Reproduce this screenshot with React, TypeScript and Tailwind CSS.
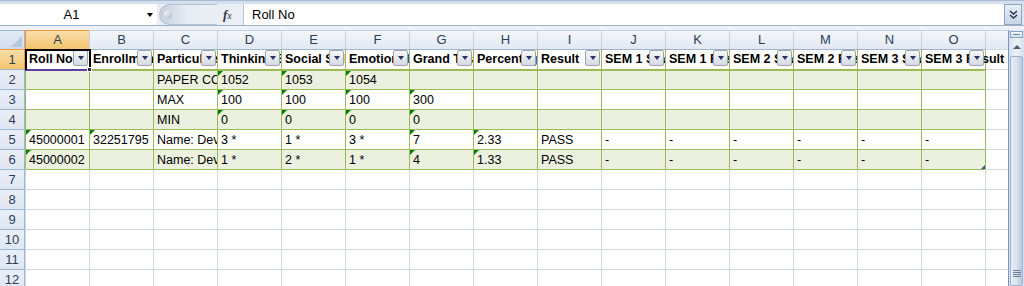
import React from "react";

const COLS = ["A","B","C","D","E","F","G","H","I","J","K","L","M","N","O"];

const HEAD = [
  "Roll No","Enrollment No","Particulars","Thinking Skills","Social Skills","Emotional Skills",
  "Grand Total","Percentage","Result","SEM 1 Status","SEM 1 Result","SEM 2 Status","SEM 2 Result","SEM 3 Status","SEM 3 Result",
];

type Cell = { v?: string; tri?: boolean };

const DATA: Cell[][] = [
  [{}, {}, { v: "PAPER CODE" }, { v: "1052", tri: true }, { v: "1053", tri: true }, { v: "1054", tri: true }, {}, {}, {}, {}, {}, {}, {}, {}, {}],
  [{}, {}, { v: "MAX" }, { v: "100", tri: true }, { v: "100", tri: true }, { v: "100", tri: true }, { v: "300", tri: true }, {}, {}, {}, {}, {}, {}, {}, {}],
  [{}, {}, { v: "MIN" }, { v: "0", tri: true }, { v: "0", tri: true }, { v: "0", tri: true }, { v: "0", tri: true }, {}, {}, {}, {}, {}, {}, {}, {}],
  [{ v: "45000001", tri: true }, { v: "32251795", tri: true }, { v: "Name: Devansh" }, { v: "3 *" }, { v: "1 *" }, { v: "3 *" }, { v: "7", tri: true }, { v: "2.33", tri: true }, { v: "PASS" }, { v: "-" }, { v: "-" }, { v: "-" }, { v: "-" }, { v: "-" }, { v: "-" }],
  [{ v: "45000002", tri: true }, {}, { v: "Name: Dev" }, { v: "1 *" }, { v: "2 *" }, { v: "1 *" }, { v: "4", tri: true }, { v: "1.33", tri: true }, { v: "PASS" }, { v: "-" }, { v: "-" }, { v: "-" }, { v: "-" }, { v: "-" }, { v: "-" }],
];

function Tri() {
  return (
    <span className="absolute left-0 top-0 w-0 h-0 border-t-[5px] border-t-[#008000] border-r-[5px] border-r-transparent z-10" />
  );
}

function DropBtn() {
  return (
    <span className="absolute right-[1px] top-0 w-[15px] h-[16px] rounded-[2px] border border-[#9aa5b4] bg-gradient-to-b from-[#f6f7f9] to-[#d6dae2] flex items-center justify-center z-20">
      <span className="w-0 h-0 border-l-[3.5px] border-r-[3.5px] border-t-[4px] border-l-transparent border-r-transparent border-t-[#26345e]" />
    </span>
  );
}

function RowHeader({ n, sel }: { n: number; sel?: boolean }) {
  return (
    <div
      className={
        "w-[25px] h-full shrink-0 border-t border-r flex items-center justify-center text-[13px] " +
        (sel
          ? "bg-gradient-to-b from-[#f9dfa9] to-[#f3c46d] border-[#f29536] text-[#2c3e5a]"
          : "bg-gradient-to-b from-[#e9eff8] to-[#dfe7f3] border-[#9eb6ce] text-[#2c3e5a]")
      }
    >
      {n}
    </div>
  );
}

export default function App() {
  const font = { fontFamily: '"Liberation Sans", Arial, sans-serif' };
  return (
    <div className="w-[1024px] h-[286px] overflow-hidden bg-white flex flex-col" style={font}>
      {/* formula bar */}
      <div className="h-[30px] shrink-0 bg-gradient-to-b from-[#d3deee] to-[#e7edf6] flex flex-col">
        <div className="h-[4px] border-t border-[#a9bcd6]" />
        <div className="h-[22px] flex items-stretch border-b border-[#9fb2cb]">
          <div className="w-[157px] bg-white flex items-center relative">
            <span className="flex-1 text-center text-[13px] text-black pr-[14px]">A1</span>
            <span className="absolute left-[147px] top-[9px] w-0 h-0 border-l-[3.5px] border-r-[3.5px] border-t-[4px] border-l-transparent border-r-transparent border-t-black" />
          </div>
          <div className="w-[86px] flex items-center bg-[#eaeff6]">
            <div className="ml-[2px] w-[58px] h-[21px] rounded-l-full bg-gradient-to-r from-[#c6d0dd] via-[#e8edf3] to-[#eaeff6] border-l border-t border-b border-[#b4c2d4] flex items-center">
              <span className="ml-[4px] w-[8px] h-[8px] rounded-full bg-gradient-to-br from-white to-[#a8b4c4]" />
            </div>
            <span className="ml-[6px] text-[13px] italic text-[#333]" style={{ fontFamily: '"Liberation Serif", serif' }}>
              <span className="font-bold">f</span><span className="text-[10px]">x</span>
            </span>
          </div>
          <div className="flex-1 bg-white border-l border-[#b8c6d8] flex items-center pl-[8px] text-[13px] text-black">Roll No</div>
          <div className="w-[18px] mr-[2px] bg-gradient-to-b from-[#e8eef7] to-[#c7d5e8] border border-[#8ea6c6] flex items-center justify-center">
            <svg width="9" height="10" viewBox="0 0 9 10">
              <path d="M1 1 L4.5 4 L8 1 M1 5 L4.5 8 L8 5" stroke="#22304a" strokeWidth="1.4" fill="none" />
            </svg>
          </div>
        </div>
        <div className="flex-1 bg-[#eef2f8]" />
      </div>

      {/* sheet + scrollbar */}
      <div className="flex-1 flex min-h-0">
        <div className="w-[1008px] flex flex-col">
          {/* column headers */}
          <div className="h-[19px] shrink-0 flex">
            <div className="w-[25px] shrink-0 border-t border-r border-[#9eb6ce] bg-gradient-to-b from-[#e2eaf5] to-[#d2ddec] relative">
              <svg className="absolute right-[2px] bottom-[2px]" width="11" height="11"><polygon points="11,0 11,11 0,11" fill="#b7c8de" /></svg>
            </div>
            {COLS.map((c, i) => (
              <div
                key={c}
                className={
                  "w-[64px] shrink-0 border-t border-l flex items-center justify-center text-[13px] text-[#2c3e5a] " +
                  (i === 0
                    ? "bg-gradient-to-b from-[#f9dfa9] to-[#f3c46d] border-[#f29536]"
                    : "bg-gradient-to-b from-[#f3f6fb] to-[#e2e9f3] border-[#c5d1e0]")
                }
              >
                {c}
              </div>
            ))}
            <div className="flex-1 border-t border-l border-[#c5d1e0] bg-gradient-to-b from-[#f3f6fb] to-[#e2e9f3]" />
          </div>

          {/* row 1 */}
          <div className="h-[20px] shrink-0 flex">
            <RowHeader n={1} sel />
            {HEAD.map((h, i) => (
              <div
                key={i}
                className="w-[64px] shrink-0 border-t border-l border-[#9eb6ce] border-l-[#9bbb59] relative text-[12.5px] font-bold text-black bg-white"
              >
                <div className={"absolute inset-0 flex items-center pl-[3px] whitespace-nowrap " + (i === 14 ? "overflow-visible" : "overflow-hidden")}>
                  <span className={i === 14 ? "relative z-10" : ""}>{h}</span>
                </div>
                <DropBtn />
                {i === 0 && (
                  <>
                    <span className="absolute -left-px -top-px w-[66px] h-[22px] border-2 border-black border-b-[#5b3f9a] z-30 pointer-events-none" />
                    <span className="absolute left-[61px] top-[17px] w-[5px] h-[5px] bg-[#3a2a6a] border border-white z-40" />
                  </>
                )}
              </div>
            ))}
            <div className="flex-1 border-t border-l border-[#d0d7e5] border-l-[#9bbb59] bg-white" />
          </div>

          {/* rows 2-6 */}
          {DATA.map((row, r) => {
            const band = r % 2 === 0;
            return (
              <div key={r} className="h-[20px] shrink-0 flex">
                <RowHeader n={r + 2} />
                {row.map((c, i) => (
                  <div
                    key={i}
                    className={
                      "w-[64px] shrink-0 border-t border-l border-[#9bbb59] relative text-[12.5px] text-black " +
                      (band ? "bg-[#ebf1de]" : "bg-white") +
                      (r === 0 ? " border-t-2" : "")
                    }
                  >
                    {c.tri && <Tri />}
                    <div className="absolute inset-0 flex items-center pl-[3px] pt-[1px] overflow-hidden whitespace-nowrap">{c.v}</div>
                    {r === 4 && i === 14 && (
                      <svg className="absolute right-0 bottom-0" width="4" height="4"><polygon points="4,0 4,4 0,4" fill="#3050a0" /></svg>
                    )}
                  </div>
                ))}
                <div className="flex-1 border-t border-l border-[#d0d7e5] border-l-[#9bbb59] bg-white" />
              </div>
            );
          })}

          {/* empty rows 7-12 */}
          {[7, 8, 9, 10, 11, 12].map((n) => (
            <div key={n} className="h-[20px] shrink-0 flex">
              <RowHeader n={n} />
              {COLS.map((c) => (
                <div
                  key={c}
                  className={
                    "w-[64px] shrink-0 border-l bg-white " +
                    (n === 7 ? "border-t border-t-[#9bbb59] border-l-[#d0d7e5]" : "border-t border-[#d0d7e5]")
                  }
                />
              ))}
              <div className="flex-1 border-t border-l border-[#d0d7e5] bg-white" />
            </div>
          ))}
        </div>

        {/* vertical scrollbar */}
        <div className="w-[16px] shrink-0 border-l border-[#7a96c0] bg-gradient-to-r from-[#d6e0ee] via-[#eef2f8] to-[#d6e0ee] flex flex-col items-center">
          <div className="mt-[1px] w-[13px] h-[7px] border border-[#8aa2c4] bg-gradient-to-b from-[#f5f8fc] to-[#d4dfed] flex items-center justify-center">
            <span className="w-[7px] h-px bg-[#6f87a8]" />
          </div>
          <div className="mt-[1px] w-[14px] h-[15px] flex items-center justify-center">
            <span className="w-0 h-0 border-l-[4px] border-r-[4px] border-b-[4px] border-l-transparent border-r-transparent border-b-[#4a5e7e]" />
          </div>
          <div className="mt-[2px] w-[13px] flex-1 border border-[#9fb3cf] rounded-[2px] bg-gradient-to-r from-[#e9eef6] via-[#d9e3f0] to-[#b9c9de] flex flex-col items-center justify-end pb-[8px]">
            {[0, 1, 2, 3].map((k) => (
              <span key={k} className="w-[8px] h-px bg-[#6a7f9c] mt-[1px]" />
            ))}
          </div>
        </div>
      </div>
    </div>
  );
}
